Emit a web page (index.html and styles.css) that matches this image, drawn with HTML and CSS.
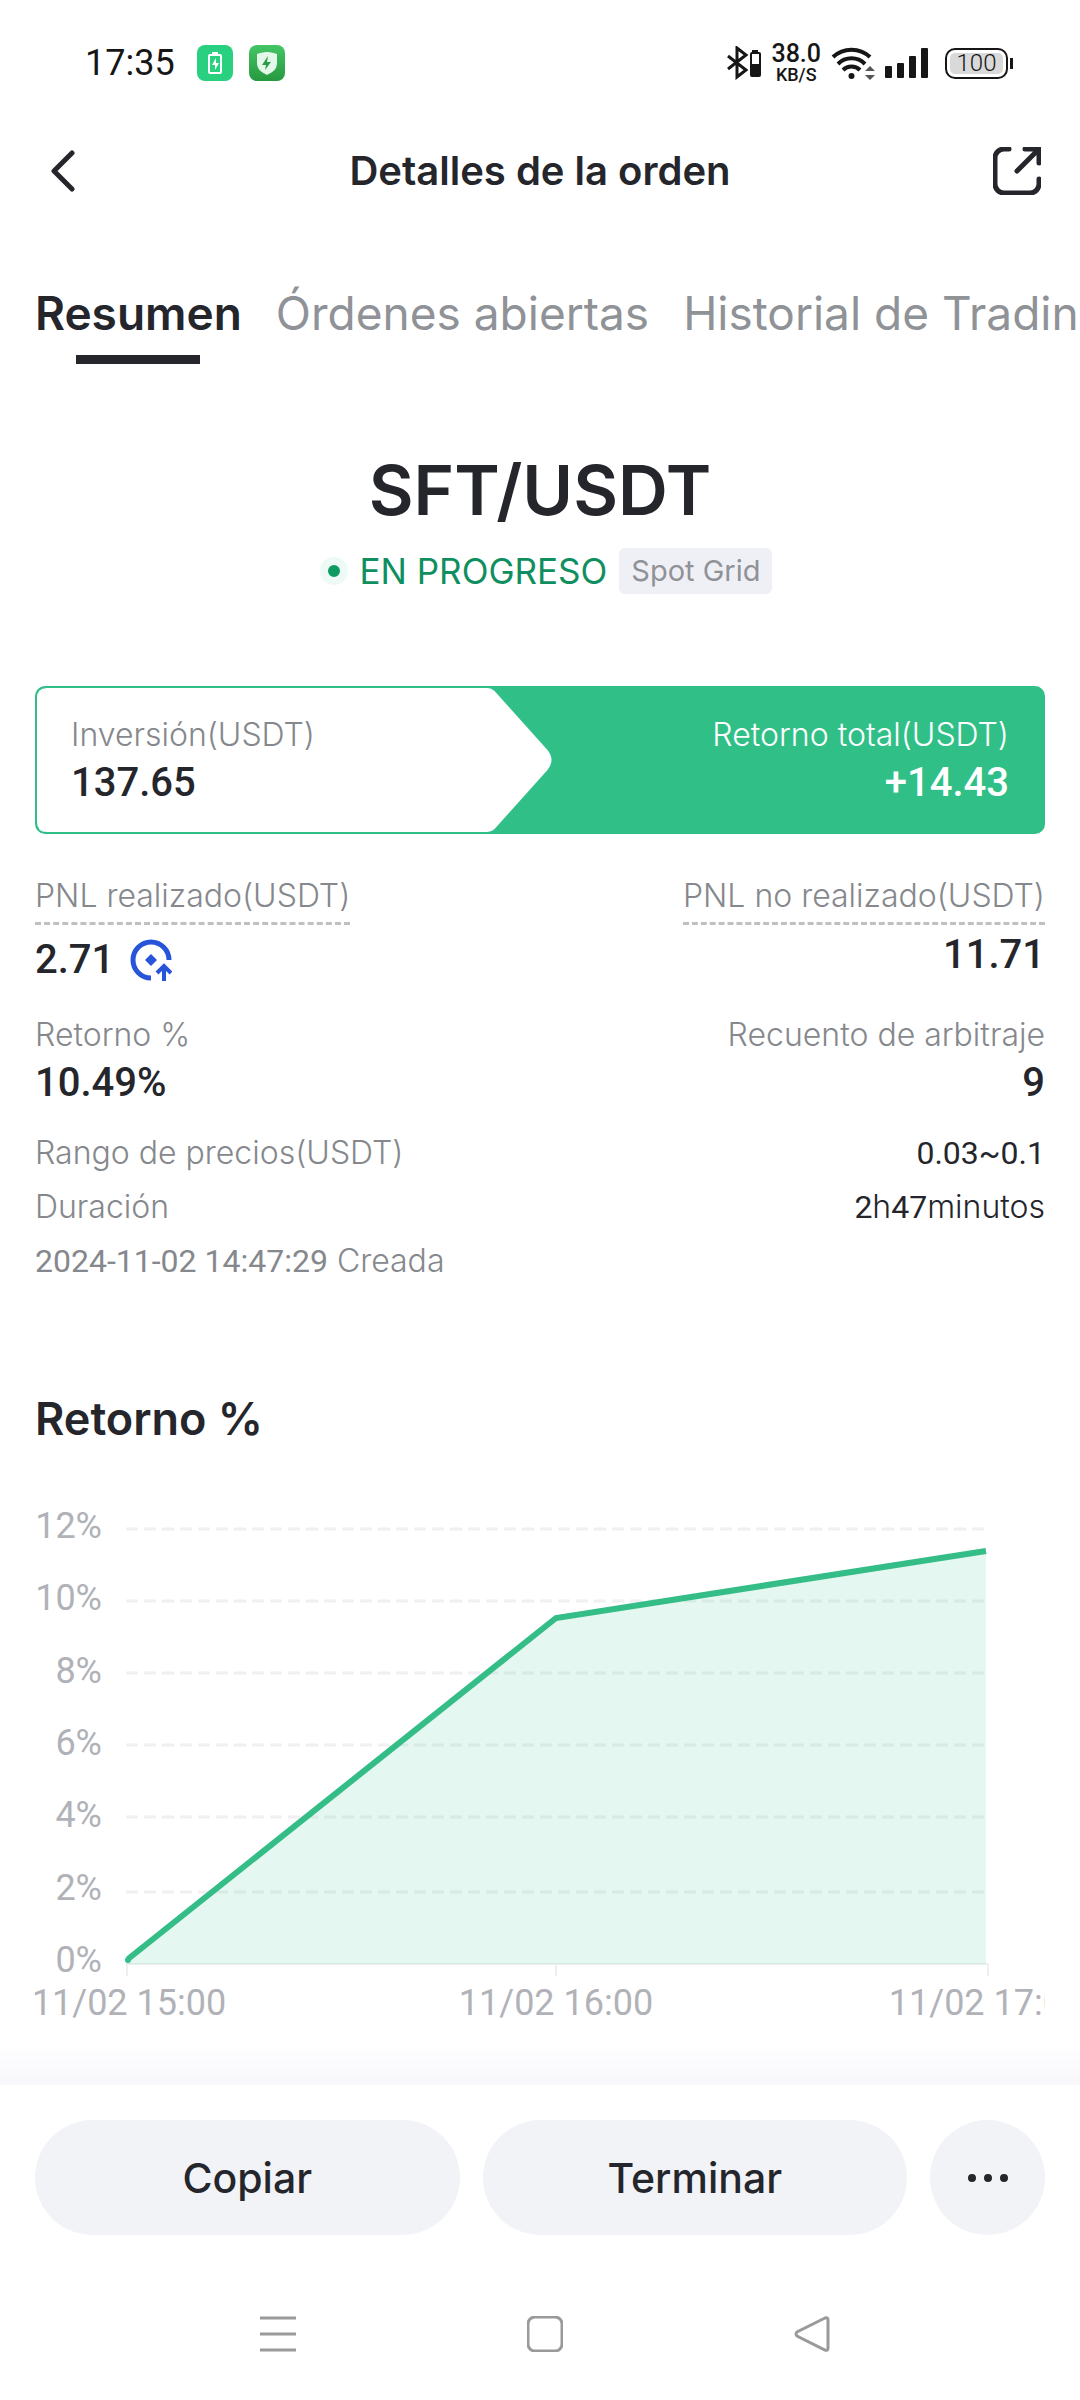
FILE: index.html
```html
<!DOCTYPE html>
<html lang="es">
<head>
<meta charset="utf-8">
<meta name="viewport" content="width=device-width, initial-scale=1">
<title>Detalles de la orden</title>
<link rel="stylesheet" href="styles.css">
</head>
<body>
<div class="status-bar">
  <div class="status-left">
    <span class="clock">17:35</span>
    <svg class="app-icon" viewBox="0 0 36 36" aria-hidden="true">
      <rect width="36" height="36" rx="8" fill="#29d07f"/>
      <rect x="12" y="10" width="12" height="18" rx="1" fill="none" stroke="#fff" stroke-width="2"/>
      <path d="M15 7h6v2h-6z" fill="#fff"/>
      <path d="M19 13l-4 7h3v5l4-7h-3z" fill="#fff"/>
    </svg>
    <svg class="app-icon" viewBox="0 0 36 36" aria-hidden="true">
      <defs><linearGradient id="shield-bg" x1="0" y1="0" x2="0" y2="1"><stop offset="0" stop-color="#45c566"/><stop offset="1" stop-color="#26993f"/></linearGradient></defs>
      <rect width="36" height="36" rx="8" fill="url(#shield-bg)"/>
      <path d="M18 7c4 0 7 1 10 2v9c0 6-4 9-10 12C12 27 8 24 8 18V9c3-1 6-2 10-2z" fill="#e4f8ea"/>
      <path d="M19 11l-6 9h4l-1 5 6-8h-4z" fill="#2a9d46"/>
    </svg>
  </div>
  <div class="status-right">
    <svg class="icon-bluetooth" viewBox="0 0 34 34" aria-hidden="true">
      <path d="M1 10l18 14-9 7V2l9 7L1 23" fill="none" stroke="#161616" stroke-width="3"/>
      <path d="M25 6v-2h6v2" fill="#161616"/>
      <rect x="24" y="7" width="9" height="23" rx="1" fill="none" stroke="#161616" stroke-width="2"/>
      <path d="M24 18h9v12h-9z" fill="#161616"/>
    </svg>
    <div class="net-speed"><span class="net-value">38.0</span><span class="net-unit">KB/S</span></div>
    <svg class="icon-wifi" viewBox="0 0 44 36" aria-hidden="true">
      <g fill="none" stroke="#161616" stroke-width="4">
        <path d="M2 12a27 27 0 0 1 37 0"/>
        <path d="M7 19a19 19 0 0 1 27 0"/>
        <path d="M12 25a12 12 0 0 1 17 0"/>
      </g>
      <circle cx="20.500" cy="31" r="3" fill="#161616"/>
      <path d="M34 26l5-5 5 5zM34 30h10l-5 5z" fill="#555"/>
    </svg>
    <svg class="icon-signal" viewBox="0 0 44 30" aria-hidden="true">
      <g fill="#161616"><rect y="18" width="7" height="12" rx="1"/><rect x="12" y="15" width="7" height="15" rx="1"/><rect x="24" y="8" width="7" height="22" rx="1"/><rect x="36" width="7" height="30" rx="1"/></g>
    </svg>
    <div class="battery">100</div>
  </div>
</div>

<header class="app-header">
  <button class="icon-button" type="button" aria-label="Volver">
    <svg class="icon-back" viewBox="0 0 24 42"><path d="M21 3L3 21l18 18" fill="none" stroke="#25262c" stroke-width="5" stroke-linecap="round" stroke-linejoin="round"/></svg>
  </button>
  <h1 class="app-title">Detalles de la orden</h1>
  <button class="icon-button" type="button" aria-label="Compartir">
    <svg class="icon-share" viewBox="0 0 48 48"><path d="M16 2h-5a9 9 0 0 0-9 9v26a9 9 0 0 0 9 9h26a9 9 0 0 0 9-9v-5M24 24L46 2M32 2h14v14" fill="none" stroke="#25262c" stroke-width="5" stroke-linecap="round" stroke-linejoin="round"/></svg>
  </button>
</header>

<div class="tabs" role="tablist">
  <button class="tab tab-active" type="button" role="tab" aria-selected="true">Resumen</button>
  <button class="tab" type="button" role="tab" aria-selected="false">Órdenes abiertas</button>
  <button class="tab" type="button" role="tab" aria-selected="false">Historial de Trading</button>
</div>

<main class="content">
  <section class="pair">
    <h2 class="pair-name">SFT/USDT</h2>
    <div class="pair-status">
      <span class="live-dot"></span>
      <span class="live-text">EN PROGRESO</span>
      <span class="badge">Spot Grid</span>
    </div>
  </section>

  <section class="totals">
    <svg class="totals-shape" viewBox="0 0 1011 148" preserveAspectRatio="none" aria-hidden="true"><path d="M12 2H453Q457 2 460 5L513 64Q521 74 513 84L460 143Q457 146 453 146H12Q2 146 2 136V12Q2 2 12 2z" fill="#fff"/></svg>
    <div class="metric">
      <span class="label">Inversión(USDT)</span>
      <strong class="value">137.65</strong>
    </div>
    <div class="metric metric-end metric-light">
      <span class="label">Retorno total(USDT)</span>
      <strong class="value">+14.43</strong>
    </div>
  </section>

  <section class="metrics">
    <div class="metric-row">
      <div class="metric">
        <span class="label label-hint">PNL realizado(USDT)</span>
        <div class="value-line">
          <strong class="value">2.71</strong>
          <svg class="icon-transfer" viewBox="0 0 42 42" aria-hidden="true">
            <path d="M21 39A18 18 0 1 1 39 21" fill="none" stroke="#2754d8" stroke-width="5"/>
            <path d="M21 15l6 6-6 6-6-6z" fill="#2754d8"/>
            <path d="M34 42V27M27 34l7-7 7 7" fill="none" stroke="#2754d8" stroke-width="4"/>
          </svg>
        </div>
      </div>
      <div class="metric metric-end">
        <span class="label label-hint">PNL no realizado(USDT)</span>
        <strong class="value">11.71</strong>
      </div>
    </div>
    <div class="metric-row">
      <div class="metric">
        <span class="label">Retorno %</span>
        <strong class="value">10.49%</strong>
      </div>
      <div class="metric metric-end">
        <span class="label">Recuento de arbitraje</span>
        <strong class="value">9</strong>
      </div>
    </div>
    <div class="facts">
      <div class="fact"><span class="label">Rango de precios(USDT)</span><span class="fact-value"><span class="digits">0.03~0.1</span></span></div>
      <div class="fact"><span class="label">Duración</span><span class="fact-value"><span class="digits">2</span>h<span class="digits">47</span>minutos</span></div>
      <div class="fact"><span class="label"><span class="digits">2024-11-02 14:47:29</span> Creada</span></div>
    </div>
  </section>

  <section class="history">
    <h3 class="section-title">Retorno %</h3>
    <svg class="chart" viewBox="2 0 1010 560" role="img" aria-label="Retorno % por hora">
      <g class="grid-lines">
        <path d="M93 49H955M93 121H955M93 193H955M93 265H955M93 337H955M93 412H955"/>
      </g>
      <path class="axis" d="M93 484H955M94 484V496M523 484V496M955 484V496"/>
      <path class="area" d="M93 480L523 138L953 71V484H93z"/>
      <path class="line" d="M95 479L523 138L953 71"/>
      <circle class="start" cx="95" cy="480" r="3"/>
      <g class="y-labels">
        <text x="69" y="58">12%</text>
        <text x="69" y="130">10%</text>
        <text x="69" y="203">8%</text>
        <text x="69" y="275">6%</text>
        <text x="69" y="347">4%</text>
        <text x="69" y="420">2%</text>
        <text x="69" y="492">0%</text>
      </g>
      <g class="x-labels">
        <text x="96" y="535">11/02 15:00</text>
        <text x="523" y="535">11/02 16:00</text>
        <text x="953" y="535">11/02 17:00</text>
      </g>
    </svg>
  </section>
</main>

<footer class="actions">
  <button class="action" type="button">Copiar</button>
  <button class="action" type="button">Terminar</button>
  <button class="action action-more" type="button" aria-label="Más">
    <svg class="icon-more" viewBox="0 0 42 10"><g fill="#25262c"><circle cx="5" cy="5" r="4"/><circle cx="21" cy="5" r="4"/><circle cx="37" cy="5" r="4"/></g></svg>
  </button>
</footer>

<nav class="system-nav" aria-label="Sistema">
  <button class="nav-button" type="button" aria-label="Recientes"><svg class="nav-icon" viewBox="0 0 36 36"><path d="M0 2h36M0 18h36M0 34h36"/></svg></button>
  <button class="nav-button" type="button" aria-label="Inicio"><svg class="nav-icon" viewBox="0 0 36 36"><rect x="1" y="1" width="34" height="34" rx="7"/></svg></button>
  <button class="nav-button" type="button" aria-label="Atrás"><svg class="nav-icon" viewBox="0 0 36 36"><path d="M31 2L3 16q-2 2 0 4l28 14q3 1 3-2V4q0-3-3-2z"/></svg></button>
</nav>
</body>
</html>
```

FILE: styles.css
```css
* {
  box-sizing: border-box;
}

body {
  margin: 0;
  min-height: 100vh;
  display: flex;
  flex-direction: column;
  background: #fff;
  color: #25262c;
  font-family: Inter, "Liberation Sans", sans-serif;
}

h1, h2, h3 {
  margin: 0;
  font-weight: 600;
}

button {
  margin: 0;
  padding: 0;
  border: 0;
  background: none;
  color: inherit;
  font: inherit;
}

svg {
  display: block;
}

.status-bar {
  height: 126px;
  padding: 0 72px 0 85px;
  display: flex;
  align-items: center;
  justify-content: space-between;
  font-family: Roboto, sans-serif;
  color: #161616;
}

.status-left,
.status-right {
  display: flex;
  align-items: center;
}

.status-left {
  gap: 16px;
}

.clock {
  font-size: 36px;
  line-height: 44px;
  margin-right: 6px;
}

.app-icon {
  width: 36px;
  height: 36px;
}

.status-right {
  gap: 10px;
}

.icon-bluetooth {
  width: 34px;
  height: 34px;
}

.net-speed {
  display: flex;
  flex-direction: column;
  align-items: center;
  font-weight: 500;
}

.net-value {
  font-size: 25px;
  line-height: 24px;
}

.net-unit {
  font-size: 18px;
  line-height: 18px;
}

.icon-wifi {
  width: 44px;
  height: 36px;
}

.icon-signal {
  width: 44px;
  height: 30px;
}

.battery {
  position: relative;
  width: 63px;
  height: 31px;
  margin-left: 6px;
  border: 2px solid #161616;
  border-radius: 10px;
  background: #d9d9d9;
  box-shadow: inset 0 0 0 3px #fff;
  font-size: 24px;
  font-weight: 300;
  line-height: 27px;
  text-align: center;
}

.battery::after {
  content: "";
  position: absolute;
  left: 63px;
  top: 8px;
  width: 3px;
  height: 11px;
  background: #161616;
}

.app-header {
  height: 90px;
  padding: 0 36px;
  display: flex;
  align-items: center;
  justify-content: space-between;
}

.icon-button {
  width: 54px;
  height: 54px;
  display: flex;
  align-items: center;
  justify-content: center;
}

.icon-back {
  width: 24px;
  height: 42px;
}

.icon-share {
  width: 48px;
  height: 48px;
}

.app-title {
  font-size: 40px;
  line-height: 48px;
}

.tabs {
  margin-top: 69px;
  padding-left: 35px;
  display: flex;
  gap: 34px;
  overflow: hidden;
}

.tab {
  flex: none;
  padding-bottom: 23px;
  font-size: 46px;
  line-height: 56px;
  color: #8f9296;
  white-space: nowrap;
}

.tab-active {
  padding-bottom: 0;
  display: flex;
  flex-direction: column;
  align-items: center;
  gap: 14px;
  font-weight: 600;
  color: #25262c;
}

.tab-active::after {
  content: "";
  width: 60%;
  height: 9px;
  background: #25262c;
}

.content {
  flex: 1;
  padding: 84px 35px 0;
}

.pair {
  display: flex;
  flex-direction: column;
  align-items: center;
  gap: 16px;
}

.pair-name {
  font-size: 69px;
  line-height: 84px;
}

.pair-status {
  padding-left: 12px;
  display: flex;
  align-items: center;
  gap: 12px;
}

.live-dot {
  width: 28px;
  height: 28px;
  border: 8px solid #eefaf5;
  border-radius: 50%;
  background: #0d9a63;
}

.live-text {
  font-size: 35px;
  line-height: 46px;
  color: #0f8f5f;
}

.badge {
  padding: 0 12px;
  border-radius: 6px;
  background: #eff0f6;
  color: #8f9296;
  font-size: 29px;
  line-height: 46px;
}

.totals {
  position: relative;
  margin-top: 92px;
  padding: 29px 36px 27px;
  display: flex;
  justify-content: space-between;
  border-radius: 10px;
  background: #31bf88;
}

.totals-shape {
  position: absolute;
  inset: 0;
  width: 100%;
  height: 100%;
}

.totals .metric {
  position: relative;
}

.metric {
  display: flex;
  flex-direction: column;
  align-items: flex-start;
  gap: 4px;
}

.metric-end {
  align-items: flex-end;
}

.label {
  font-size: 32px;
  font-weight: 300;
  line-height: 40px;
  color: #85888c;
}

.label-hint {
  margin-bottom: 2px;
  padding-bottom: 6px;
  border-bottom: 3px dashed #bfc0c2;
}

.value {
  font-family: Roboto, sans-serif;
  font-size: 40px;
  line-height: 48px;
  font-weight: 500;
}

.metric-light .label,
.metric-light .value {
  color: #fff;
}

.metrics {
  margin-top: 42px;
  display: flex;
  flex-direction: column;
  gap: 26px;
}

.metric-row {
  display: flex;
  justify-content: space-between;
}

.value-line {
  height: 58px;
  display: flex;
  align-items: center;
  gap: 16px;
}

.icon-transfer {
  width: 42px;
  height: 42px;
}

.facts {
  display: flex;
  flex-direction: column;
  gap: 14px;
}

.fact {
  display: flex;
  justify-content: space-between;
}

.fact-value {
  font-size: 32px;
  font-weight: 300;
  line-height: 40px;
}

.digits {
  font-family: Roboto, sans-serif;
  font-weight: 400;
}

.history {
  margin-top: 110px;
}

.section-title {
  font-size: 45px;
  line-height: 56px;
}

.chart {
  width: 100%;
  height: auto;
  margin-top: 33px;
  font-family: Roboto, sans-serif;
  font-size: 36px;
}

.grid-lines {
  fill: none;
  stroke: #f0f0f2;
  stroke-width: 3;
  stroke-dasharray: 12 6;
}

.axis {
  fill: none;
  stroke: #eeeff1;
  stroke-width: 2;
}

.area {
  fill: #31bf88;
  fill-opacity: 0.13;
}

.line {
  fill: none;
  stroke: #35bd88;
  stroke-width: 6;
}

.start {
  fill: #35bd88;
}

.y-labels,
.x-labels {
  fill: #b0b2b8;
}

.y-labels {
  text-anchor: end;
}

.x-labels {
  text-anchor: middle;
}

.actions {
  position: relative;
  padding: 35px 35px 0;
  display: flex;
  gap: 23px;
  background: #fff;
}

.actions::before {
  content: "";
  position: absolute;
  left: 0;
  right: 0;
  bottom: 100%;
  height: 42px;
  background: linear-gradient(rgba(249, 249, 253, 0), #f8f8fc);
}

.action {
  flex: 1;
  height: 115px;
  border-radius: 58px;
  background: #f1f3f7;
  font-size: 41px;
  font-weight: 500;
}

.action-more {
  flex: none;
  width: 115px;
  display: flex;
  align-items: center;
  justify-content: center;
}

.icon-more {
  width: 42px;
  height: 10px;
}

.system-nav {
  padding: 81px 250px 48px 260px;
  display: flex;
  justify-content: space-between;
}

.nav-button {
  width: 36px;
  height: 36px;
}

.nav-icon {
  width: 36px;
  height: 36px;
  fill: none;
  stroke: #9a9a9a;
  stroke-width: 3;
}
```
